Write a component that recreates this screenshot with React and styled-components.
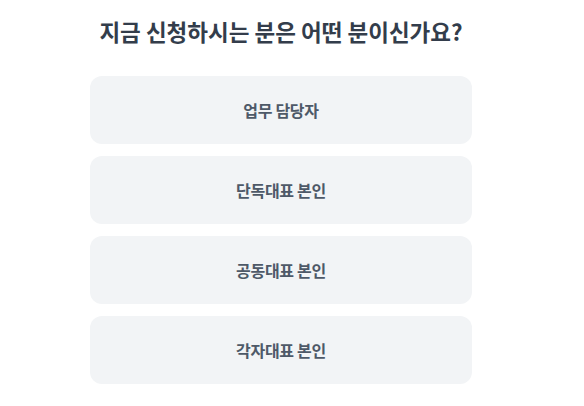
import React from 'react';
import styled, { createGlobalStyle } from 'styled-components';

const GlobalStyle = createGlobalStyle`
  html, body {
    margin: 0;
    padding: 0;
    background: #ffffff;
  }
  body {
    font-family: "Noto Sans CJK KR", "Noto Sans", sans-serif;
  }
`;

const Page = styled.div`
  width: 584px;
  height: 406px;
  box-sizing: border-box;
  padding: 15px 0 0 90px;
`;

const Wrap = styled.div`
  width: 382px;
  display: flex;
  flex-direction: column;
  align-items: stretch;
`;

const Title = styled.h2`
  margin: 0 0 29px;
  font-size: 22.5px;
  font-weight: 700;
  line-height: 32px;
  color: #333d4b;
  text-align: center;
  letter-spacing: 0;
  white-space: nowrap;
`;

const Options = styled.div`
  display: flex;
  flex-direction: column;
  gap: 12px;
`;

const Option = styled.button`
  height: 68px;
  border: none;
  border-radius: 12px;
  background: #f2f4f6;
  color: #4e5968;
  font-family: inherit;
  font-size: 16px;
  font-weight: 700;
  letter-spacing: -0.3px;
  cursor: pointer;
  display: flex;
  align-items: center;
  justify-content: center;
`;

const options = ['업무 담당자', '단독대표 본인', '공동대표 본인', '각자대표 본인'];

export default function App() {
  return (
    <Page>
      <GlobalStyle />
      <Wrap>
        <Title>지금 신청하시는 분은 어떤 분이신가요?</Title>
        <Options>
          {options.map((o) => (
            <Option key={o}>{o}</Option>
          ))}
        </Options>
      </Wrap>
    </Page>
  );
}
